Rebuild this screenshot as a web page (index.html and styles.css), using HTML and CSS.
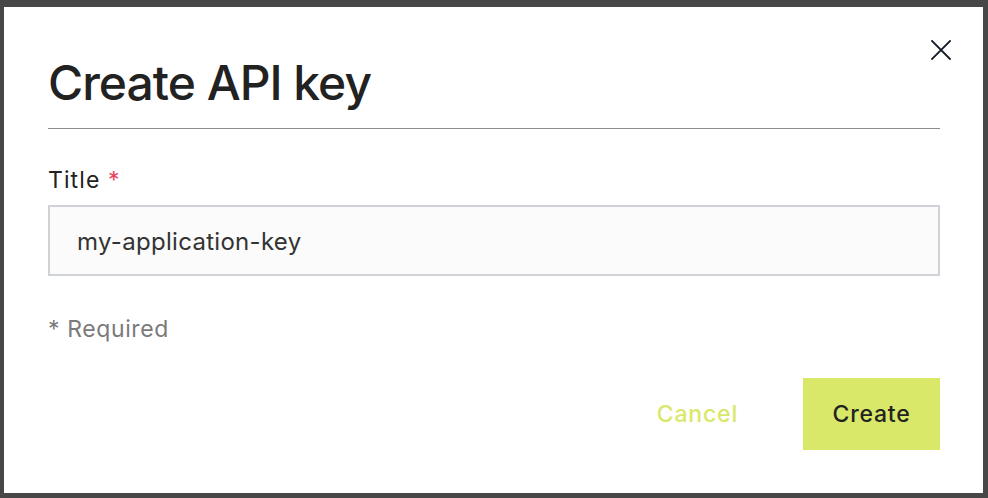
FILE: index.html
```html
<!DOCTYPE html>
<html lang="en">
<head>
<meta charset="utf-8">
<title>Create API key</title>
<link rel="stylesheet" href="styles.css">
</head>
<body>
<div class="backdrop">
  <div class="modal" role="dialog" aria-labelledby="dlg-title">
    <button class="close" aria-label="Close">
      <svg viewBox="0 0 20 20" width="20" height="20" aria-hidden="true">
        <path d="M1 1 L19 19 M19 1 L1 19" stroke="currentColor" stroke-width="1.8" fill="none" stroke-linecap="square"/>
      </svg>
    </button>
    <header class="modal-header">
      <h1 id="dlg-title" class="modal-title">Create API key</h1>
    </header>
    <form class="modal-body">
      <label class="field-label" for="title">Title <span class="req">*</span></label>
      <input id="title" class="text-input" type="text" value="my-application-key">
      <p class="hint">* Required</p>
      <div class="actions">
        <button type="button" class="btn btn-ghost">Cancel</button>
        <button type="button" class="btn btn-primary">Create</button>
      </div>
    </form>
  </div>
</div>
</body>
</html>
```

FILE: styles.css
```css
html, body {
  margin: 0;
  padding: 0;
  height: 100%;
}
body {
  background: #474747;
  font-family: Inter, "Noto Sans", sans-serif;
  color: #222222;
}
.backdrop {
  box-sizing: border-box;
  height: 100%;
  padding: 7px 5px 5px 4px;
  display: flex;
}
.modal {
  position: relative;
  flex: 1;
  background: #ffffff;
  padding: 0 43px 0 44px;
  display: flex;
  flex-direction: column;
}
.close {
  position: absolute;
  top: 33px;
  right: 32px;
  width: 20px;
  height: 20px;
  padding: 0;
  border: 0;
  background: none;
  color: #141a26;
  cursor: pointer;
}
.close svg { display: block; }
.modal-header {
  padding-top: 47px;
  padding-bottom: 16px;
  border-bottom: 1px solid #8c8c8c;
}
.modal-title {
  margin: 0;
  font-size: 48px;
  line-height: 58px;
  font-weight: 500;
  letter-spacing: -1px;
  color: #222222;
}
.modal-body {
  display: flex;
  flex-direction: column;
  padding-top: 38px;
}
.field-label {
  font-size: 23px;
  line-height: 26px;
  letter-spacing: 1.1px;
  color: #222222;
}
.req { color: #e8435f; }
.text-input {
  box-sizing: border-box;
  margin-top: 12px;
  height: 71px;
  width: 100%;
  border: 2px solid #cfd2d6;
  background: #fbfbfb;
  padding: 2px 27px 0;
  font-family: inherit;
  font-size: 24px;
  letter-spacing: 0.3px;
  color: #333333;
  outline: none;
}
.hint {
  margin: 40px 0 0;
  font-size: 23px;
  line-height: 26px;
  color: #7a7a7a;
  letter-spacing: 0.6px;
}
.actions {
  display: flex;
  justify-content: flex-end;
  align-items: center;
  gap: 65px;
  margin-top: 36px;
}
.btn {
  font-family: inherit;
  font-size: 23px;
  font-weight: 500;
  letter-spacing: 0.8px;
  border: 0;
  cursor: pointer;
}
.btn-ghost {
  background: none;
  color: #d9e868;
  padding: 0;
}
.btn-primary {
  background: #d9e868;
  color: #222222;
  width: 137px;
  height: 72px;
  padding: 0;
}
```
